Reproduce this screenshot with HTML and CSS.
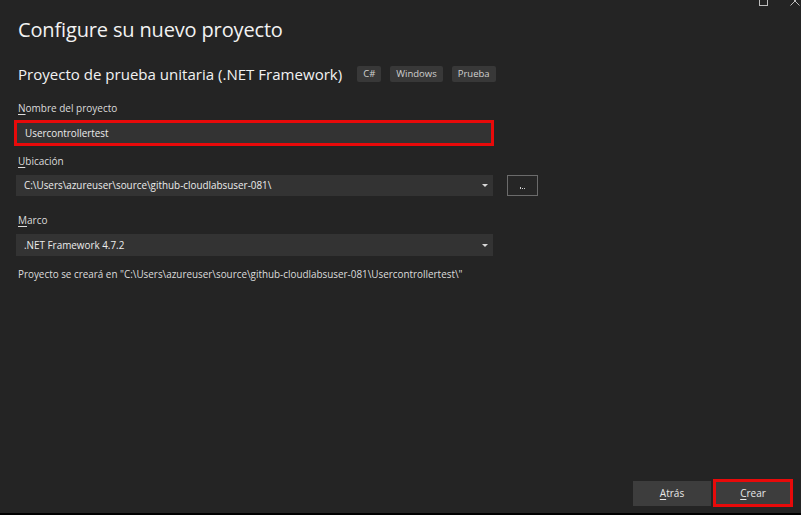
FILE: index.html
```html
<!DOCTYPE html>
<html lang="es">
<head>
<meta charset="utf-8">
<title>Configure su nuevo proyecto</title>
<link rel="stylesheet" href="styles.css">
</head>
<body>
<div class="window">
  <div class="titlebar">
    <span class="ctl ctl-max"></span>
    <span class="ctl ctl-close">
      <svg width="10" height="10" viewBox="0 0 10 10"><path d="M0.5 0.5 L9.5 9.5 M9.5 0.5 L0.5 9.5" stroke="#bdbdbd" stroke-width="1" fill="none"/></svg>
    </span>
  </div>
  <main class="content">
    <h1 class="title">Configure su nuevo proyecto</h1>
    <div class="subtitle-row">
      <h2 class="subtitle">Proyecto de prueba unitaria (.NET Framework)</h2>
      <span class="tag">C#</span>
      <span class="tag">Windows</span>
      <span class="tag">Prueba</span>
    </div>

    <label class="label label-name"><u>N</u>ombre del proyecto</label>
    <div class="highlight field-wrap">
      <div class="field">Usercontrollertest</div>
    </div>

    <label class="label label-loc"><u>U</u>bicación</label>
    <div class="loc-row">
      <div class="field select">
        <span>C:\Users\azureuser\source\github-cloudlabsuser-081\</span>
        <span class="caret"></span>
      </div>
      <div class="browse"><span class="dot"></span><span class="dot"></span><span class="dot"></span></div>
    </div>

    <label class="label label-marco"><u>M</u>arco</label>
    <div class="field select field-marco">
      <span>.NET Framework 4.7.2</span>
      <span class="caret"></span>
    </div>

    <p class="path">Proyecto se creará en "C:\Users\azureuser\source\github-cloudlabsuser-081\Usercontrollertest\"</p>
  </main>
  <footer class="footer">
    <button class="btn"><u>A</u>trás</button>
    <div class="highlight btn-wrap">
      <button class="btn btn-primary"><u>C</u>rear</button>
    </div>
  </footer>
</div>
</body>
</html>
```
FILE: styles.css
```css
html, body {
  margin: 0;
  padding: 0;
  background: #000;
}
body {
  width: 801px;
  height: 515px;
  overflow: hidden;
  font-family: "Open Sans", "Noto Sans", sans-serif;
  color: #e6e6e6;
}
.window {
  width: 801px;
  height: 513px;
  background: #242424;
  display: flex;
  flex-direction: column;
}
.titlebar {
  height: 6px;
  display: flex;
  justify-content: flex-end;
  align-items: flex-end;
  gap: 22px;
  padding-right: 1px;
  overflow: hidden;
}
.ctl {
  display: block;
  width: 10px;
  height: 10px;
  flex: none;
}
.ctl-max {
  box-sizing: border-box;
  width: 9px;
  height: 9px;
  border: 1px solid #bdbdbd;
}
.ctl-close svg { display: block; }
.content {
  flex: 1;
  padding-left: 18px;
  display: flex;
  flex-direction: column;
  align-items: flex-start;
}
.title {
  margin: 10px 0 0 0;
  font-size: 20px;
  font-weight: 400;
  line-height: 28px;
  color: #f2f2f2;
  letter-spacing: -0.15px;
}
.subtitle-row {
  display: flex;
  align-items: center;
  margin-top: 17px;
  height: 26px;
}
.subtitle {
  margin: 0 15px 0 0;
  font-size: 15.05px;
  font-weight: 400;
  color: #f2f2f2;
}
.tag {
  background: #383838;
  color: #d0d0d0;
  font-size: 9.5px;
  border-radius: 2px;
  height: 16px;
  line-height: 16px;
  padding: 0 6px;
  margin-right: 9px;
}
.label {
  font-size: 10px;
  color: #dcdcdc;
  line-height: 14px;
}
.label u { text-decoration-thickness: 1px; text-underline-offset: 2px; }
.label-name { margin-top: 14px; }
.label-loc { margin-top: 8px; }
.label-marco { margin-top: 17px; }
.highlight {
  border: 3px solid #e80a0a;
}
.field-wrap {
  margin-left: -4px;
  margin-top: 5px;
}
.field {
  box-sizing: border-box;
  width: 474px;
  height: 20px;
  background: #333333;
  font-size: 9.9px;
  color: #ececec;
  line-height: 20px;
  padding-left: 8px;
}
.loc-row {
  display: flex;
  align-items: flex-start;
  margin-left: -2px;
  margin-top: 7px;
  gap: 14px;
}
.select {
  display: flex;
  justify-content: space-between;
  align-items: center;
  width: 477px;
  height: 21px;
  padding-right: 5px;
  line-height: 21px;
}
.caret {
  width: 0;
  height: 0;
  border-left: 3px solid transparent;
  border-right: 3px solid transparent;
  border-top: 3px solid #d8d8d8;
}
.browse {
  box-sizing: border-box;
  width: 31px;
  height: 21px;
  border: 1px solid #6b6b6b;
  background: #262626;
  display: flex;
  justify-content: center;
  align-items: flex-end;
  gap: 1px;
  padding-bottom: 6px;
}
.dot {
  width: 1px;
  height: 1px;
  background: #cfcfcf;
}
.dot:first-child { height: 2px; }
.field-marco {
  margin-left: -2px;
  margin-top: 7px;
  height: 22px;
  line-height: 22px;
}
.path {
  margin: 11px 0 0 0;
  font-size: 9.9px;
  color: #dcdcdc;
  line-height: 14px;
}
.footer {
  display: flex;
  justify-content: flex-end;
  align-items: center;
  gap: 2px;
  padding-right: 8px;
  padding-bottom: 6px;
}
.btn {
  box-sizing: border-box;
  width: 78px;
  height: 25px;
  border: none;
  margin: 0;
  background: #3d3d3d;
  color: #e8e8e8;
  font-family: "Open Sans", "Noto Sans", sans-serif;
  font-size: 10px;
  padding: 0;
  display: block;
}
.btn u { text-underline-offset: 2px; }
.btn-primary { width: 74px; height: 22px; }
```
